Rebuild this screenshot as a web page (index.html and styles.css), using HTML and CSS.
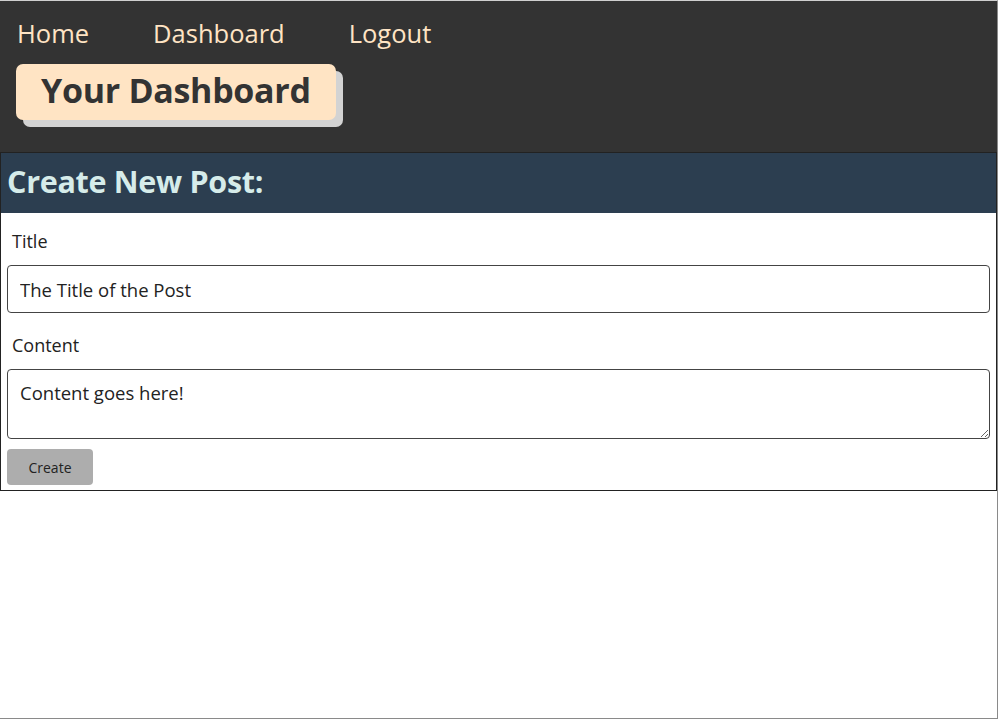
FILE: index.html
```html
<!DOCTYPE html>
<html>
<head>
<meta charset="utf-8">
<title>Dashboard</title>
<link rel="stylesheet" href="styles.css">
</head>
<body>
<div class="frame">
  <header class="top">
    <nav class="nav">
      <a href="#" class="nav-link">Home</a>
      <a href="#" class="nav-link">Dashboard</a>
      <a href="#" class="nav-link">Logout</a>
    </nav>
    <h1 class="page-title">Your Dashboard</h1>
  </header>
  <section class="card">
    <h2 class="card-head">Create New Post:</h2>
    <form class="form">
      <label class="label" for="title">Title</label>
      <input class="field" id="title" type="text" value="The Title of the Post">
      <label class="label" for="content">Content</label>
      <textarea class="field area" id="content">Content goes here!</textarea>
      <button class="btn" type="button">Create</button>
    </form>
  </section>
</div>
</body>
</html>
```
FILE: styles.css
```css
html, body {
  margin: 0;
  padding: 0;
  height: 100%;
  background: #fff;
}
body {
  font-family: "Open Sans", "Noto Sans", sans-serif;
  color: #222;
}
.frame {
  box-sizing: border-box;
  height: 719px;
  border-top: 1px solid #d0d0d0;
  border-right: 1px solid #8a8a8a;
  border-bottom: 1px solid #8a8a8a;
  overflow: hidden;
}
.top {
  background: #333333;
  padding: 13px 16px 32px;
  height: 151px;
  box-sizing: border-box;
}
.nav {
  display: flex;
  gap: 64px;
  padding-left: 1px;
}
.nav-link {
  color: #ffe4c4;
  text-decoration: none;
  font-size: 25.5px;
  line-height: 38px;
}
.page-title {
  display: inline-block;
  margin: 12px 0 0;
  background: #ffe4c4;
  color: #333;
  font-size: 34px;
  font-weight: 700;
  line-height: 52px;
  height: 56px;
  box-sizing: border-box;
  padding: 0 25px;
  border-radius: 7px;
  box-shadow: 7px 7px 0 #d3d3d3;
  letter-spacing: -0.3px;
}
.card {
  border: 1px solid #222;
}
.card-head {
  margin: 0;
  background: #2c3e50;
  color: #d6ecea;
  font-size: 30.5px;
  font-weight: 700;
  height: 60px;
  line-height: 56px;
  padding-left: 6px;
  letter-spacing: -0.3px;
}
.form {
  display: flex;
  flex-direction: column;
  align-items: flex-start;
  padding: 14px 6px 5px;
}
.label {
  font-size: 18px;
  line-height: 28px;
  padding-left: 5px;
  margin-bottom: 10px;
  color: #222;
}
.field {
  box-sizing: border-box;
  width: 100%;
  height: 48px;
  border: 1px solid #444;
  border-radius: 4px;
  padding: 0 12px;
  font-family: inherit;
  font-size: 18.5px;
  color: #222;
  margin-bottom: 18px;
}
.area {
  height: 70px;
  padding: 10px 12px;
  margin-bottom: 10px;
  resize: vertical;
  line-height: 26px;
}
.btn {
  width: 86px;
  height: 36px;
  background: #adadad;
  border: none;
  border-radius: 4px;
  font-family: inherit;
  font-size: 14px;
  color: #222;
}
```
